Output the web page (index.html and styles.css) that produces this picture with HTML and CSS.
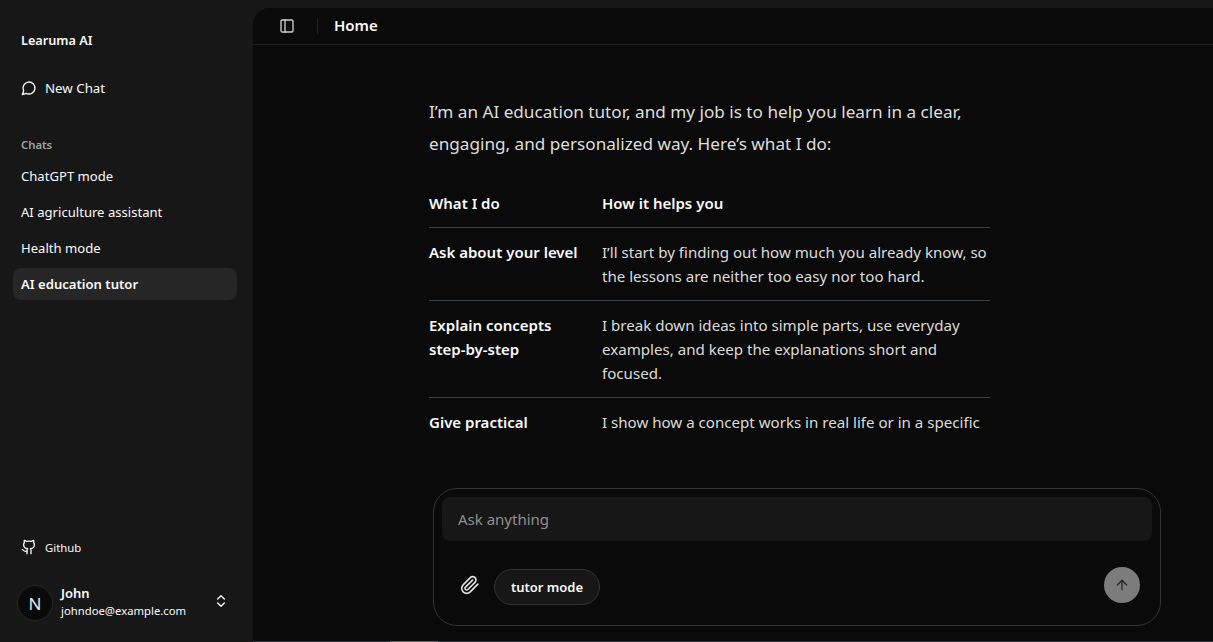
FILE: index.html
```html
<!DOCTYPE html>
<html lang="en">
<head>
<meta charset="utf-8">
<title>Learuma AI</title>
<link rel="stylesheet" href="styles.css">
</head>
<body>
<aside class="sidebar">
  <div class="brand">Learuma AI</div>
  <a class="new-chat">
    <svg class="icon" viewBox="0 0 24 24"><path d="M7.9 20A9 9 0 1 0 4 16.1L2 22Z"/></svg>
    <span>New Chat</span>
  </a>
  <div class="group-label">Chats</div>
  <nav class="chat-list">
    <a class="chat-item">ChatGPT mode</a>
    <a class="chat-item">AI agriculture assistant</a>
    <a class="chat-item">Health mode</a>
    <a class="chat-item active">AI education tutor</a>
  </nav>
  <a class="github">
    <svg class="icon" viewBox="0 0 24 24"><path d="M15 22v-4a4.8 4.8 0 0 0-1-3.5c3 0 6-2 6-5.5.08-1.25-.27-2.48-1-3.5.28-1.15.28-2.35 0-3.5 0 0-1 0-3 1.5-2.64-.5-5.36-.5-8 0C6 2 5 2 5 2c-.3 1.15-.3 2.35 0 3.5A5.403 5.403 0 0 0 4 9c0 3.5 3 5.5 6 5.5-.39.49-.68 1.05-.85 1.65-.17.6-.22 1.23-.15 1.85v4"/><path d="M9 18c-4.51 2-5-2-7-2"/></svg>
    <span>Github</span>
  </a>
  <div class="user">
    <div class="avatar">N</div>
    <div class="user-info">
      <div class="user-name">John</div>
      <div class="user-mail">johndoe@example.com</div>
    </div>
    <svg class="icon chevrons" viewBox="0 0 24 24"><path d="m7 15 5 5 5-5"/><path d="m7 9 5-5 5 5"/></svg>
  </div>
</aside>
<main class="main">
  <header class="topbar">
    <svg class="icon panel" viewBox="0 0 24 24"><rect x="3" y="3" width="18" height="18" rx="2"/><path d="M9 3v18"/></svg>
    <span class="topbar-sep"></span>
    <h1 class="title">Home</h1>
  </header>
  <section class="thread">
    <div class="prose">
      <p class="intro">I’m an AI education tutor, and my job is to help you learn in a clear, engaging, and personalized way. Here’s what I do:</p>
      <table class="tutor-table">
        <thead>
          <tr><th class="col-a">What I do</th><th>How it helps you</th></tr>
        </thead>
        <tbody>
          <tr><th class="col-a">Ask about your level</th><td>I’ll start by finding out how much you already know, so the lessons are neither too easy nor too hard.</td></tr>
          <tr><th class="col-a">Explain concepts step-by-step</th><td>I break down ideas into simple parts, use everyday examples, and keep the explanations short and focused.</td></tr>
          <tr><th class="col-a">Give practical</th><td>I show how a concept works in real life or in a specific</td></tr>
        </tbody>
      </table>
    </div>
  </section>
  <form class="composer">
    <div class="ask">Ask anything</div>
    <div class="composer-row">
      <svg class="icon clip" viewBox="0 0 24 24"><path d="m21.44 11.05-9.19 9.19a6 6 0 0 1-8.49-8.49l8.57-8.57A4 4 0 1 1 18 8.84l-8.59 8.57a2 2 0 0 1-2.83-2.83l8.49-8.48"/></svg>
      <span class="pill">tutor mode</span>
      <span class="send"><svg class="icon arrow" viewBox="0 0 24 24"><path d="m5 12 7-7 7 7"/><path d="M12 19V5"/></svg></span>
    </div>
  </form>
  <div class="bottom-edge"><span class="bottom-thumb"></span></div>
</main>
</body>
</html>
```

FILE: styles.css
```css
* { box-sizing: border-box; }
html, body { height: 100%; }
body {
  margin: 0;
  height: 642px;
  overflow: hidden;
  display: flex;
  background: #171717;
  color: #fafafa;
  font-family: "Noto Sans", "Liberation Sans", sans-serif;
}
.icon {
  width: 16px;
  height: 16px;
  fill: none;
  stroke: currentColor;
  stroke-width: 2;
  stroke-linecap: round;
  stroke-linejoin: round;
  flex: none;
}
.sidebar {
  width: 253px;
  flex: none;
  display: flex;
  flex-direction: column;
  padding: 0 16px 0 13px;
}
.brand {
  margin: 30px 0 0 8px;
  height: 20px;
  line-height: 20px;
  font-size: 12.7px;
  font-weight: 600;
}
.new-chat {
  margin: 28px 0 0 8px;
  height: 20px;
  display: flex;
  align-items: center;
  gap: 8px;
  font-size: 13.3px;
}
.group-label {
  margin: 39px 0 0 8px;
  height: 16px;
  line-height: 16px;
  font-size: 11.3px;
  font-weight: 600;
  color: #a1a1a1;
}
.chat-list {
  margin-top: 7px;
  display: flex;
  flex-direction: column;
  gap: 4px;
}
.chat-item {
  height: 32px;
  line-height: 32px;
  padding-left: 8px;
  font-size: 13.1px;
  border-radius: 8px;
}
.chat-item.active {
  background: #262626;
  font-weight: 600;
}
.github {
  margin: auto 0 0 8px;
  height: 20px;
  display: flex;
  align-items: center;
  gap: 8px;
  font-size: 11.3px;
}
.user {
  margin: 28px 0 21px 4px;
  display: flex;
  align-items: center;
  height: 36px;
}
.avatar {
  width: 36px;
  height: 36px;
  border-radius: 50%;
  background: #0a0a0a;
  border: 1px solid #262626;
  display: flex;
  align-items: center;
  justify-content: center;
  font-size: 17px;
  font-weight: 400;
  color: #e8e8e8;
  flex: none;
}
.user-info { margin: 0 0 3px 8px; flex: 1; }
.user-name { font-size: 13px; font-weight: 600; line-height: 18px; }
.user-mail { font-size: 11.3px; line-height: 18px; }
.chevrons { margin: 0 8px 4px 0; }
.main {
  flex: 1;
  margin-top: 8px;
  min-width: 0;
  background: #0a0a0a;
  border-top-left-radius: 16px;
  display: flex;
  flex-direction: column;
}
.topbar {
  height: 37px;
  flex: none;
  display: flex;
  align-items: center;
  padding-left: 26px;
  border-bottom: 1px solid #1f1f1f;
}
.panel { color: #d0d0d0; }
.topbar-sep {
  width: 1px;
  height: 16px;
  margin: 0 16px 0 22px;
  background: #222;
}
.title {
  margin: 0 0 2px;
  font-size: 15px;
  font-weight: 600;
}
.thread {
  flex: 1;
  min-height: 0;
  overflow: hidden;
  padding-left: 176px;
}
.prose { width: 561px; }
.intro {
  margin: 51px 0 0;
  font-size: 17.15px;
  line-height: 32px;
  color: #dedede;
}
.tutor-table {
  margin-top: 20px;
  width: 561px;
  border-collapse: collapse;
  table-layout: fixed;
  line-height: 24px;
}
.col-a { width: 173px; }
.tutor-table th {
  text-align: left;
  font-size: 15px;
  font-weight: 600;
  vertical-align: top;
  padding: 12px 16px 12px 0;
  color: #fafafa;
}
.tutor-table thead th { padding: 11px 12px 12px 0; }
.tutor-table td {
  padding: 12px 0;
  vertical-align: top;
  font-size: 15.1px;
  color: #dcdcdc;
}
.tutor-table tbody tr:last-child th,
.tutor-table tbody tr:last-child td { padding-bottom: 0; }
.tutor-table tr { border-bottom: 1px solid #3a3f44; }
.tutor-table tbody tr:last-child { border-bottom: 0; }
.composer {
  flex: none;
  width: 728px;
  height: 138px;
  margin: 54px 0 15px 180px;
  padding: 8px;
  border: 1px solid #333;
  border-radius: 24px;
  background: #0a0a0a;
}
.ask {
  height: 44px;
  line-height: 44px;
  padding-left: 16px;
  border-radius: 8px;
  background: #171717;
  font-size: 15px;
  color: #8f8f8f;
}
.composer-row {
  margin-top: 26px;
  height: 36px;
  display: flex;
  align-items: center;
  padding-left: 18px;
  padding-right: 12px;
}
.clip { width: 20px; height: 20px; color: #e0e0e0; margin-right: 14px; }
.pill {
  width: 106px;
  height: 36px;
  margin-top: 4px;
  line-height: 34px;
  text-align: center;
  border: 1px solid #333;
  border-radius: 18px;
  background: #171717;
  font-size: 13px;
  font-weight: 600;
}
.send {
  margin-left: auto;
  width: 36px;
  height: 36px;
  border-radius: 50%;
  background: #7c7c7c;
  color: #262626;
  display: flex;
  align-items: center;
  justify-content: center;
}
.bottom-edge {
  height: 1px;
  flex: none;
  background: #2b3436;
  padding-left: 137px;
}
.bottom-thumb {
  display: block;
  width: 48px;
  height: 1px;
  background: #666;
}
```
